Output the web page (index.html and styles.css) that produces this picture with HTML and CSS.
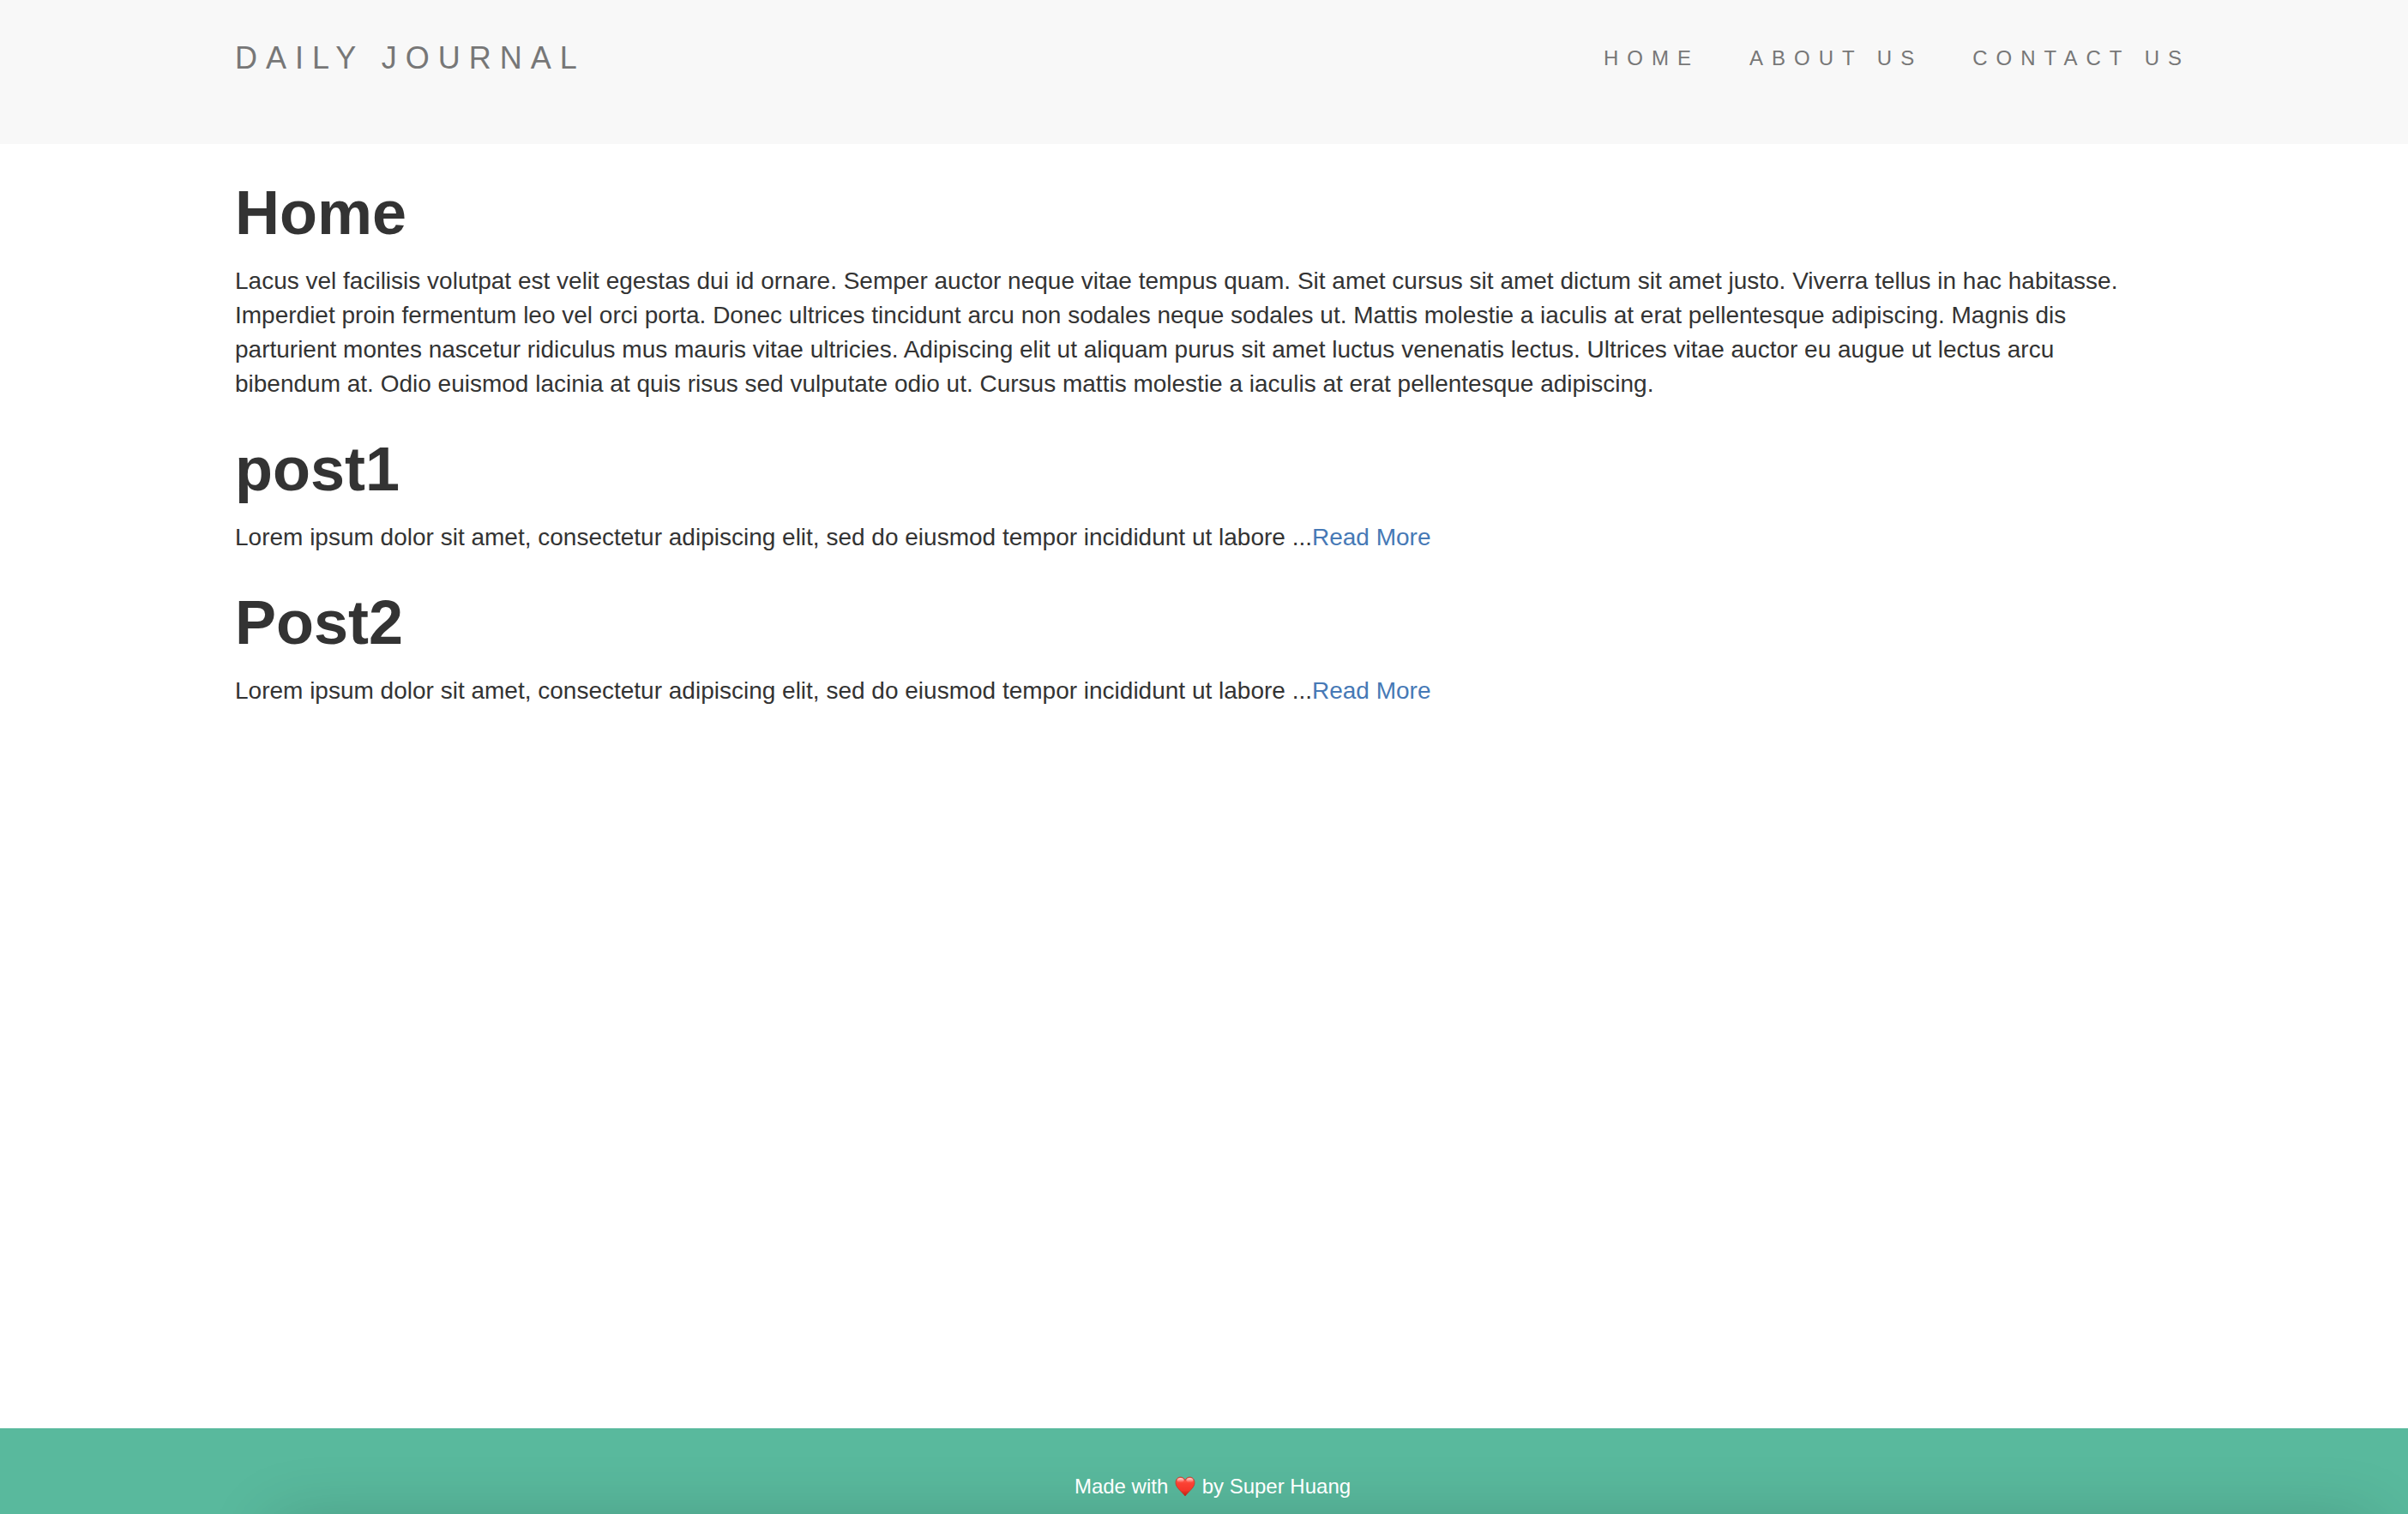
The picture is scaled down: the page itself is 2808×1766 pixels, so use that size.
FILE: index.html
```html
<!DOCTYPE html>
<html lang="en">
<head>
  <meta charset="utf-8">
  <title>Daily Journal</title>
  <link rel="stylesheet" href="styles.css">
</head>
<body>
  <header class="navbar">
    <nav class="container navbar-inner">
      <a class="brand" href="#">DAILY JOURNAL</a>
      <ul class="nav-links">
        <li><a href="#">HOME</a></li>
        <li><a href="#">ABOUT US</a></li>
        <li><a href="#">CONTACT US</a></li>
      </ul>
    </nav>
  </header>

  <main class="container content">
    <h1>Home</h1>
    <p>Lacus vel facilisis volutpat est velit egestas dui id ornare. Semper auctor neque vitae tempus quam. Sit amet cursus sit amet dictum sit amet justo. Viverra tellus in hac habitasse. Imperdiet proin fermentum leo vel orci porta. Donec ultrices tincidunt arcu non sodales neque sodales ut. Mattis molestie a iaculis at erat pellentesque adipiscing. Magnis dis parturient montes nascetur ridiculus mus mauris vitae ultricies. Adipiscing elit ut aliquam purus sit amet luctus venenatis lectus. Ultrices vitae auctor eu augue ut lectus arcu bibendum at. Odio euismod lacinia at quis risus sed vulputate odio ut. Cursus mattis molestie a iaculis at erat pellentesque adipiscing.</p>
    <h1>post1</h1>
    <p>Lorem ipsum dolor sit amet, consectetur adipiscing elit, sed do eiusmod tempor incididunt ut labore ...<a href="#">Read More</a></p>
    <h1>Post2</h1>
    <p>Lorem ipsum dolor sit amet, consectetur adipiscing elit, sed do eiusmod tempor incididunt ut labore ...<a href="#">Read More</a></p>
  </main>

  <footer class="footer">
    <p>Made with <svg class="heart" viewBox="0 0 26 24" role="img" aria-label="love">
      <defs>
        <linearGradient id="heart-fill" x1="0" y1="0" x2="0" y2="1">
          <stop offset="0" stop-color="#ff6a5c"/>
          <stop offset=".35" stop-color="#fb4032"/>
          <stop offset=".7" stop-color="#f5362a"/>
          <stop offset="1" stop-color="#b5200f"/>
        </linearGradient>
        <linearGradient id="heart-shine" x1="0" y1="0" x2="0" y2="1">
          <stop offset="0" stop-color="#fff" stop-opacity=".75"/>
          <stop offset="1" stop-color="#fff" stop-opacity="0"/>
        </linearGradient>
      </defs>
      <path d="M13 4.600C11.800 2.300 9.900 1 7.700 1 4.400 1 2 3.700 2 7.500c0 5.800 6.600 9.700 11 15.500 4.400-5.800 11-9.700 11-15.500C24 3.700 21.600 1 18.300 1c-2.200 0-4.100 1.300-5.300 3.600z" fill="url(#heart-fill)" stroke="#c42a1c" stroke-width=".7"/>
      <ellipse cx="7.600" cy="4.600" rx="3.900" ry="2.700" fill="url(#heart-shine)"/>
      <ellipse cx="18.400" cy="4.600" rx="3.900" ry="2.700" fill="url(#heart-shine)"/>
    </svg> by Super Huang</p>
  </footer>
</body>
</html>
```
FILE: styles.css
```css
* {
  box-sizing: border-box;
}

body {
  display: flex;
  flex-direction: column;
  min-height: 100vh;
  margin: 0;
  background: #fff;
  color: #333;
  font-family: "Liberation Sans", Helvetica, Arial, sans-serif;
  font-size: 28px;
  line-height: 40px;
}

a {
  color: #4679b6;
  text-decoration: none;
}

.container {
  width: 100%;
  max-width: 2260px;
  margin: 0 auto;
}

.navbar {
  padding: 48px 0 80px;
  background: #f8f8f8;
}

.navbar-inner,
.nav-links {
  display: flex;
  align-items: center;
}

.navbar-inner {
  justify-content: space-between;
}

.navbar a {
  color: #777;
  letter-spacing: 10px;
}

.brand {
  font-size: 36px;
}

.nav-links {
  gap: 58px;
  margin: 0 -20px 0 0;
  padding: 0;
  list-style: none;
  font-size: 24px;
}

.content {
  flex: 1;
  padding: 41px 20px 0 0;
}

.content h1 {
  margin: 0 0 20px;
  font-size: 72px;
  line-height: 79px;
}

.content p {
  margin: 0 0 40px;
}

.footer {
  position: relative;
  overflow: hidden;
  padding: 48px 0 12px 20px;
  background: #59b99d;
  color: #fff;
  font-size: 24px;
  text-align: center;
}

.footer p {
  position: relative;
  z-index: 1;
  margin: 0;
}

/* Soft shade rising from the bottom edge */
.footer::after {
  content: "";
  position: absolute;
  top: 100%;
  left: 320px;
  right: 40px;
  height: 200px;
  box-shadow: 0 10px 80px rgba(0, 0, 0, 0.18);
}

.heart {
  width: 26px;
  height: 24px;
  vertical-align: -4px;
}
```
